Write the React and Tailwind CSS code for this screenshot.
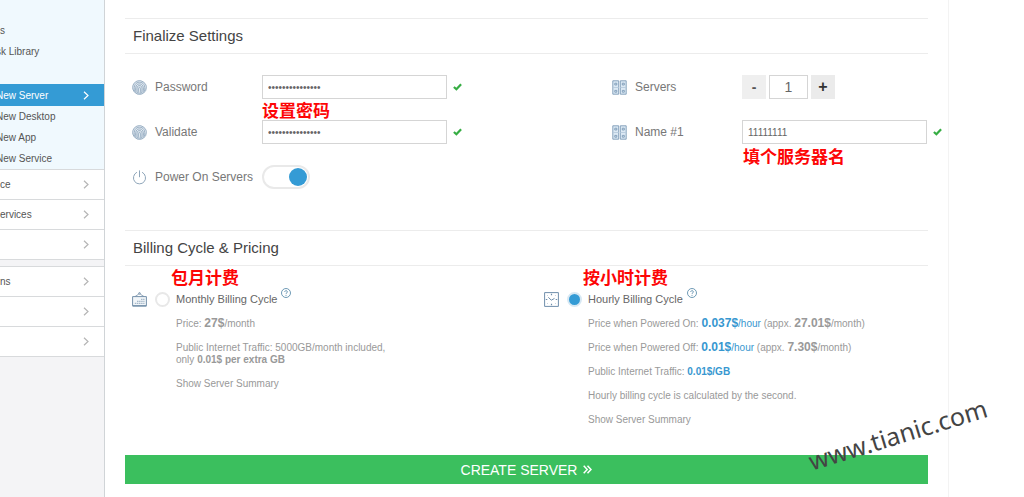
import { useState } from "react";

function Chevron({ className = "" }) {
  return (
    <svg viewBox="0 0 6 9" className={`h-[9px] w-1.5 shrink-0 ${className}`} fill="none" stroke="currentColor" strokeWidth="1.2" aria-hidden="true">
      <path d="M1 .7 5 4.5 1 8.3" />
    </svg>
  );
}

function Check() {
  return (
    <svg viewBox="0 0 9 8" className="h-2 w-[9px] shrink-0" fill="none" stroke="#36ad43" strokeWidth="2.2" aria-hidden="true">
      <path d="M.9 4 3.4 6.3 8.1 1.2" />
    </svg>
  );
}

function Fingerprint() {
  return (
    <svg viewBox="0 0 15 15" className="size-[15px] shrink-0" fill="none" stroke="#86a0b8" strokeWidth=".8" strokeLinecap="round" aria-hidden="true">
      <circle cx="7.5" cy="7.5" r="6.9" fill="#e3ebf2" strokeDasharray="6 .8" />
      <path d="M2.3 10.8C1.3 5.5 3.8 2.2 7.5 2.2s6.3 3.3 5.1 8.6" />
      <path d="M3.9 12.2C2.9 7 4.3 3.9 7.5 3.9s4.7 3.2 3.6 8.3" />
      <path d="M5.4 13C4.5 8.5 5 5.5 7.5 5.5s3.1 3 2.1 7.500" />
      <path d="M6.9 13.5C6.3 10.5 6.3 7.2 7.5 7.2s1.3 3.3.7 6.3" />
    </svg>
  );
}

function Power() {
  return (
    <svg viewBox="0 0 15 15" className="size-[15px] shrink-0" fill="none" stroke="#8fa6ba" strokeWidth="1" strokeLinecap="round" aria-hidden="true">
      <path d="M7.5 .8v6M4.6 2.4a6.1 6.1 0 1 0 5.8 0" />
    </svg>
  );
}

function Racks() {
  return (
    <svg viewBox="0 0 15 15" className="size-[15px] shrink-0" fill="#dce9f4" stroke="#7d9bb7" strokeWidth=".9" aria-hidden="true">
      <path d="M.8.8h5.9v13.4H.8zM8.3.8h5.9v13.4H8.3z" />
      <path d="M2.8 3.2h2v1.8h-2zM10.3 3.2h2v1.8h-2zM2.8 10.4h2v1.8h-2zM10.3 10.4h2v1.8h-2z" />
      <path d="M.8 7.5h5.9M8.3 7.5h5.9" stroke="#b7cbdd" />
    </svg>
  );
}

function Calendar() {
  return (
    <svg viewBox="0 0 15 15" className="size-[15px] shrink-0" fill="none" stroke="#7591aa" strokeWidth="1" aria-hidden="true">
      <path d="M.6 4.6h13.8v9.2H.6z" fill="#f2f6f9" />
      <path d="M3 4.600 6.900 2M12 4.600 8.100 2" strokeWidth=".8" />
      <circle cx="7.5" cy="1.400" r=".8" />
      <path d="M.6 13.900h13.800" strokeWidth="1.400" />
      <path d="M9 7.300h3.500M5 9.300h7.500M2.800 11.300h9.700" strokeDasharray="1.500 .6" strokeWidth="1.300" stroke="#a5b8c9" />
    </svg>
  );
}

function Clock() {
  return (
    <svg viewBox="0 0 15 15" className="size-[15px] shrink-0" fill="none" stroke="#708fac" strokeWidth="1" aria-hidden="true">
      <path d="M.6.6h13.800v13.800H.6z" />
      <path d="M7.500 1.800v1.500M7.500 11.700v1.500M1.800 7.500h1.500M11.700 7.500h1.500" strokeWidth="1.200" />
      <path d="M4.300 5.300 7.300 8.200 10.500 6.400" />
      <path d="M3.400 3.400l.6.6M11.600 3.400l-.6.6M3.400 11.600l.6-.6M11.600 11.600l-.6-.6" strokeWidth=".6" />
    </svg>
  );
}

function Help() {
  return (
    <svg viewBox="0 0 10 10" className="mb-3 ml-1 size-2.5 shrink-0" fill="none" stroke="#5f8fae" strokeWidth=".9" aria-hidden="true">
      <circle cx="5" cy="5" r="4.5" />
      <path d="M3.7 4c0-1.8 2.7-1.7 2.7-.1 0 1-1.4.9-1.4 2M5 6.9v1" />
    </svg>
  );
}

function Note({ children, className }) {
  return (
    <span className={`pointer-events-none absolute font-['Noto_Sans_CJK_SC',sans-serif] text-[17px] leading-5 font-bold whitespace-nowrap text-[#fd0606] ${className}`}>
      {children}
    </span>
  );
}

function MenuLink({ children, active }) {
  return (
    <a href="#" className={active ? "flex h-[22px] items-center justify-between bg-[#349bd5] pr-[15px] text-white" : "flex h-[21px] items-center"}>
      <span className="whitespace-nowrap">{children}</span>
      {active && <Chevron />}
    </a>
  );
}

function MenuGroup({ items }) {
  return (
    <ul className="divide-y divide-[#d8dadc] border-y border-[#d8dadc] bg-white">
      {items.map((label, i) => (
        <li key={i}>
          <a href="#" className="flex h-[29px] items-center justify-between pr-[15px]" aria-label={label || "Menu"}>
            <span>{label}</span>
            <Chevron className="text-[#b5b5b5]" />
          </a>
        </li>
      ))}
    </ul>
  );
}

function SectionTitle({ children }) {
  return (
    <h2 className="flex h-9 items-center border-y border-[#ececec] px-2 text-[15px] text-[#444]">{children}</h2>
  );
}

function Field({ icon, label, htmlFor, children }) {
  return (
    <div className="relative flex h-6 items-center">
      {icon}
      <label htmlFor={htmlFor} className="ml-2 w-[107px] shrink-0 text-xs whitespace-nowrap text-[#777]">{label}</label>
      {children}
    </div>
  );
}

function TextBox(props) {
  return (
    <>
      <input {...props} className="mr-1.5 h-6 w-[185px] shrink-0 border border-[#d5d5d5] bg-white px-[5px] text-[10px] text-[#666] outline-none" />
      <Check />
    </>
  );
}

function Cycle({ id, icon, label, note, checked, onChange, children }) {
  return (
    <div>
      <div className="relative flex h-5 items-center">
        {icon}
        <input
          id={id}
          type="radio"
          name="cycle"
          checked={checked}
          onChange={onChange}
          className="ml-2 size-[15px] shrink-0 appearance-none rounded-full border-2 border-[#e8e8e8] bg-white checked:border-[#d7e8f3] checked:bg-[#349bd5]"
        />
        <label htmlFor={id} className="ml-1.5 text-[11px] whitespace-nowrap text-[#666]">{label}</label>
        <Help />
        <Note className="-top-[22px] left-[39px]">{note}</Note>
      </div>
      <div className="mt-[3px] pl-11 text-[10px] leading-6 text-[#999]">{children}</div>
    </div>
  );
}

export default function App() {
  const [count, setCount] = useState(1);
  const [cycle, setCycle] = useState("hourly");
  return (
    <div className="relative flex min-h-screen overflow-hidden bg-white font-['Liberation_Sans',Arial,sans-serif]">
      <nav className="w-[105px] shrink-0 overflow-hidden border-r border-[#d0d4d7] bg-[#f4f4f6] text-[10px] text-[#555]">
        <div className="bg-[#f0f9fe] pt-5">
          <MenuLink>s</MenuLink>
          <MenuLink><span className="-ml-1">sk Library</span></MenuLink>
          <div className="mt-[22px]">
            <MenuLink active><span className="-ml-1">New Server</span></MenuLink>
            <MenuLink><span className="-ml-1">New Desktop</span></MenuLink>
            <MenuLink><span className="-ml-1">New App</span></MenuLink>
            <MenuLink><span className="-ml-1">New Service</span></MenuLink>
          </div>
        </div>
        <div className="flex flex-col gap-1.5">
          <MenuGroup items={["ce", "ervices", ""]} />
          <MenuGroup items={["ns", "", ""]} />
        </div>
      </nav>

      <main className="mr-[75px] min-w-0 flex-1 border-r border-[#f3f3f3] px-5 pt-[18px]">
        <SectionTitle>Finalize Settings</SectionTitle>
        <div className="mt-[21px] mb-[41px] grid grid-cols-[minmax(0,3fr)_minmax(0,2fr)] gap-x-1.5 pl-[7px]">
          <div className="flex flex-col gap-[21px]">
            <Field icon={<Fingerprint />} label="Password" htmlFor="password">
              <TextBox id="password" type="password" defaultValue="111111111111111" />
              <Note className="top-[25px] left-[130px]">设置密码</Note>
            </Field>
            <Field icon={<Fingerprint />} label="Validate" htmlFor="validate">
              <TextBox id="validate" type="password" defaultValue="111111111111111" />
            </Field>
            <Field icon={<Power />} label="Power On Servers" htmlFor="power">
              <input
                id="power"
                type="checkbox"
                role="switch"
                defaultChecked
                className="flex h-6 w-12 shrink-0 appearance-none items-center rounded-full border-2 border-[#e9e9e9] bg-white px-px before:size-[18px] before:rounded-full before:bg-[#bbb] checked:justify-end checked:before:bg-[#349bd5]"
              />
            </Field>
          </div>
          <div className="flex flex-col gap-[21px]">
            <Field icon={<Racks />} label="Servers" htmlFor="servers">
              <div className="flex gap-[3px]">
                <button type="button" aria-label="Fewer servers" onClick={() => setCount(Math.max(1, count - 1))} className="h-6 w-6 bg-[#efefef] text-sm leading-6 font-bold text-[#555]">-</button>
                <input id="servers" type="text" value={count} readOnly className="h-6 w-[39px] border border-[#d5d5d5] text-center text-sm text-[#666] outline-none" />
                <button type="button" aria-label="More servers" onClick={() => setCount(count + 1)} className="h-6 w-6 bg-[#ebebeb] text-base leading-6 font-bold text-[#333]">+</button>
              </div>
            </Field>
            <Field icon={<Racks />} label="Name #1" htmlFor="name">
              <TextBox id="name" type="text" defaultValue="11111111" />
              <Note className="top-[26px] left-[131px]">填个服务器名</Note>
            </Field>
          </div>
        </div>

        <SectionTitle>Billing Cycle &amp; Pricing</SectionTitle>
        <div className="mt-[23px] grid grid-cols-2 gap-x-7 pl-[7px]">
          <Cycle id="monthly" icon={<Calendar />} label="Monthly Billing Cycle" note="包月计费" checked={cycle === "monthly"} onChange={() => setCycle("monthly")}>
            <p>Price: <b className="text-xs">27$</b>/month</p>
            <p className="py-1.5 leading-3">
              Public Internet Traffic: 5000GB/month included,<br />only <b>0.01$ per extra GB</b>
            </p>
            <a href="#" className="block">Show Server Summary</a>
          </Cycle>
          <Cycle id="hourly" icon={<Clock />} label="Hourly Billing Cycle" note="按小时计费" checked={cycle === "hourly"} onChange={() => setCycle("hourly")}>
            <p>Price when Powered On: <span className="text-[#3797d0]"><b className="text-xs">0.037$</b>/hour</span> (appx. <b className="text-xs">27.01$</b>/month)</p>
            <p>Price when Powered Off: <span className="text-[#3797d0]"><b className="text-xs">0.01$</b>/hour</span> (appx. <b className="text-xs">7.30$</b>/month)</p>
            <p>Public Internet Traffic: <b className="text-[#3797d0]">0.01$/GB</b></p>
            <p>Hourly billing cycle is calculated by the second.</p>
            <a href="#" className="block">Show Server Summary</a>
          </Cycle>
        </div>

        <button type="button" className="mt-[23px] flex h-[29px] w-full items-center justify-center gap-1.5 bg-[#3bbf5e] text-sm text-white">
          CREATE SERVER
          <svg viewBox="0 0 9 9" className="size-[9px]" fill="none" stroke="currentColor" strokeWidth="1.5" aria-hidden="true">
            <path d="M.7.8 4.2 4.5.7 8.2M4.5.8 8 4.5 4.5 8.2" />
          </svg>
        </button>
      </main>

      <div className="pointer-events-none absolute right-[34px] bottom-[47px] -rotate-17 font-['Noto_Sans',sans-serif] text-[25px] leading-8 text-[#444]">www.tianic.com</div>
    </div>
  );
}
